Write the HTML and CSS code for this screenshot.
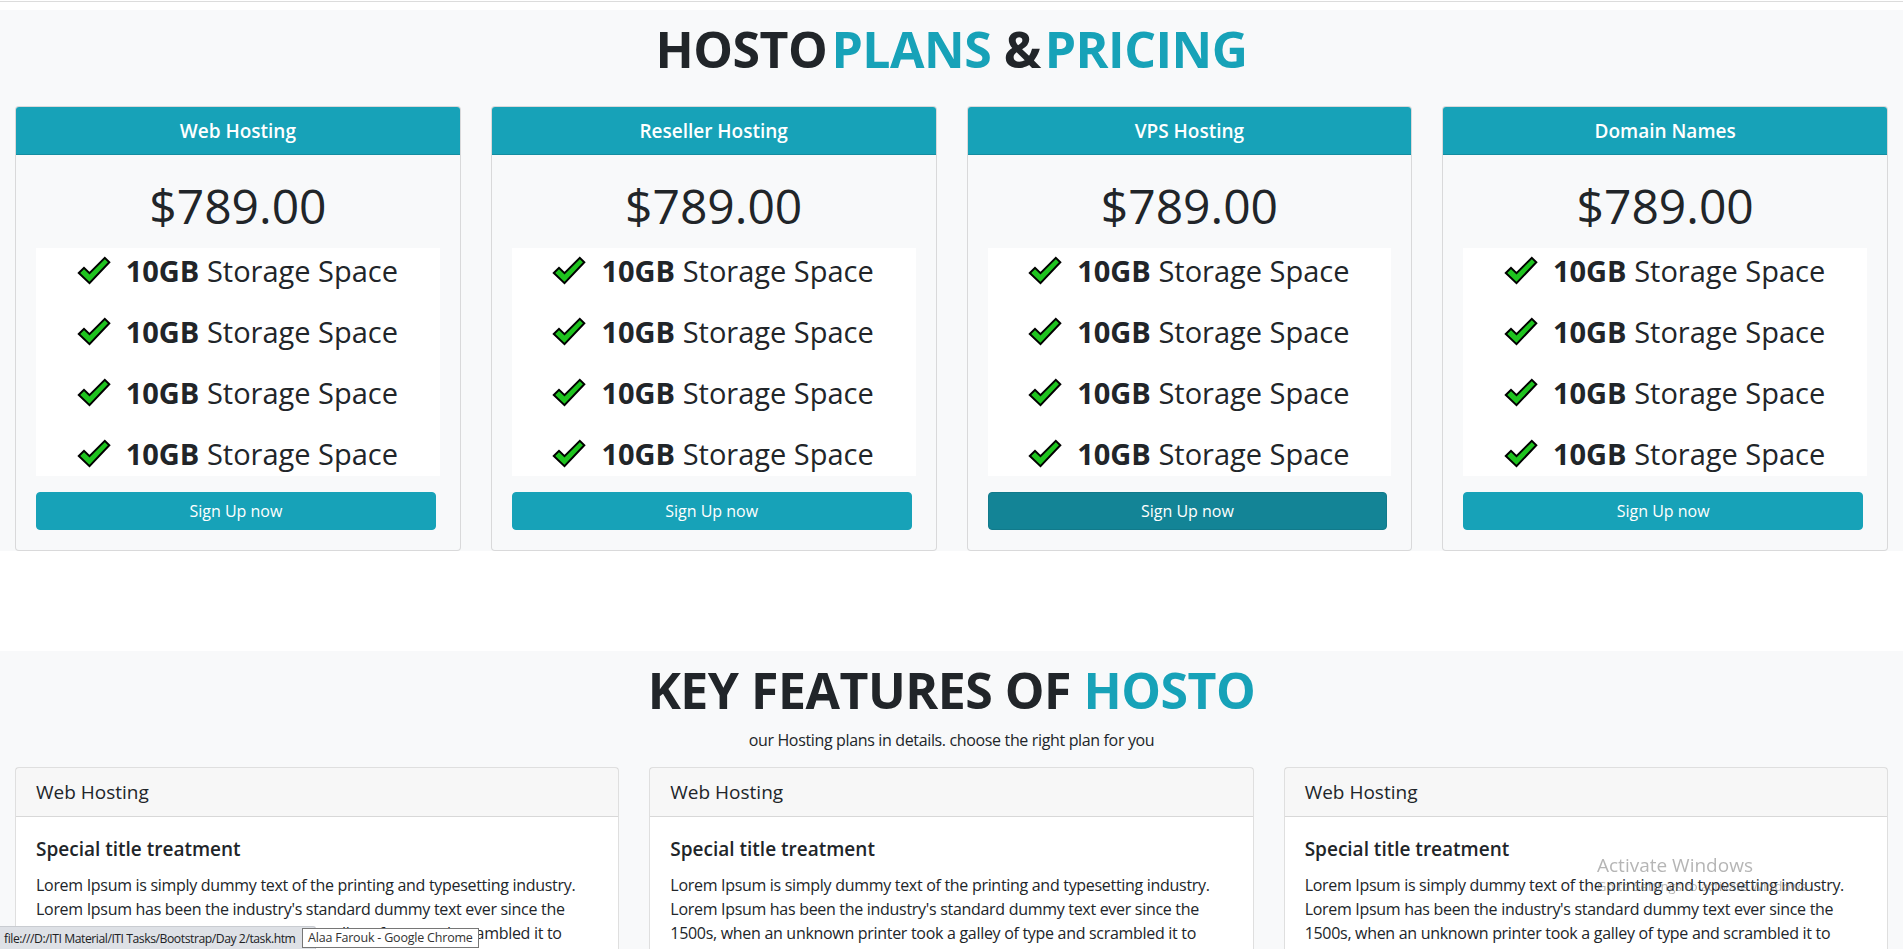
FILE: index.html
```html
<!DOCTYPE html>
<html lang="en">
<head>
<meta charset="utf-8">
<title>Hosto</title>
<link rel="stylesheet" href="styles.css">
</head>
<body>
<div class="topline"></div>
<section class="pricing">
  <h1 class="title title-pricing">HOSTO<span class="accent">PLANS</span> &amp;<span class="accent">PRICING</span></h1>
  <div class="plans">
    <div class="plan-card">
      <div class="plan-head">Web Hosting</div>
      <div class="plan-body">
        <div class="price">$789.00</div>
        <ul class="features">
          <li><svg class="check" viewBox="0 0 32 27"><polygon points="0.8,16 6,10.8 11.5,16.2 26.8,0.8 31.3,5.2 11.5,26.2"/></svg><span><b>10GB</b> Storage Space</span></li>
          <li><svg class="check" viewBox="0 0 32 27"><polygon points="0.8,16 6,10.8 11.5,16.2 26.8,0.8 31.3,5.2 11.5,26.2"/></svg><span><b>10GB</b> Storage Space</span></li>
          <li><svg class="check" viewBox="0 0 32 27"><polygon points="0.8,16 6,10.8 11.5,16.2 26.8,0.8 31.3,5.2 11.5,26.2"/></svg><span><b>10GB</b> Storage Space</span></li>
          <li><svg class="check" viewBox="0 0 32 27"><polygon points="0.8,16 6,10.8 11.5,16.2 26.8,0.8 31.3,5.2 11.5,26.2"/></svg><span><b>10GB</b> Storage Space</span></li>
        </ul>
        <button class="btn">Sign Up now</button>
      </div>
    </div>
    <div class="plan-card">
      <div class="plan-head">Reseller Hosting</div>
      <div class="plan-body">
        <div class="price">$789.00</div>
        <ul class="features">
          <li><svg class="check" viewBox="0 0 32 27"><polygon points="0.8,16 6,10.8 11.5,16.2 26.8,0.8 31.3,5.2 11.5,26.2"/></svg><span><b>10GB</b> Storage Space</span></li>
          <li><svg class="check" viewBox="0 0 32 27"><polygon points="0.8,16 6,10.8 11.5,16.2 26.8,0.8 31.3,5.2 11.5,26.2"/></svg><span><b>10GB</b> Storage Space</span></li>
          <li><svg class="check" viewBox="0 0 32 27"><polygon points="0.8,16 6,10.8 11.5,16.2 26.8,0.8 31.3,5.2 11.5,26.2"/></svg><span><b>10GB</b> Storage Space</span></li>
          <li><svg class="check" viewBox="0 0 32 27"><polygon points="0.8,16 6,10.8 11.5,16.2 26.8,0.8 31.3,5.2 11.5,26.2"/></svg><span><b>10GB</b> Storage Space</span></li>
        </ul>
        <button class="btn">Sign Up now</button>
      </div>
    </div>
    <div class="plan-card">
      <div class="plan-head">VPS Hosting</div>
      <div class="plan-body">
        <div class="price">$789.00</div>
        <ul class="features">
          <li><svg class="check" viewBox="0 0 32 27"><polygon points="0.8,16 6,10.8 11.5,16.2 26.8,0.8 31.3,5.2 11.5,26.2"/></svg><span><b>10GB</b> Storage Space</span></li>
          <li><svg class="check" viewBox="0 0 32 27"><polygon points="0.8,16 6,10.8 11.5,16.2 26.8,0.8 31.3,5.2 11.5,26.2"/></svg><span><b>10GB</b> Storage Space</span></li>
          <li><svg class="check" viewBox="0 0 32 27"><polygon points="0.8,16 6,10.8 11.5,16.2 26.8,0.8 31.3,5.2 11.5,26.2"/></svg><span><b>10GB</b> Storage Space</span></li>
          <li><svg class="check" viewBox="0 0 32 27"><polygon points="0.8,16 6,10.8 11.5,16.2 26.8,0.8 31.3,5.2 11.5,26.2"/></svg><span><b>10GB</b> Storage Space</span></li>
        </ul>
        <button class="btn btn-hover">Sign Up now</button>
      </div>
    </div>
    <div class="plan-card">
      <div class="plan-head">Domain Names</div>
      <div class="plan-body">
        <div class="price">$789.00</div>
        <ul class="features">
          <li><svg class="check" viewBox="0 0 32 27"><polygon points="0.8,16 6,10.8 11.5,16.2 26.8,0.8 31.3,5.2 11.5,26.2"/></svg><span><b>10GB</b> Storage Space</span></li>
          <li><svg class="check" viewBox="0 0 32 27"><polygon points="0.8,16 6,10.8 11.5,16.2 26.8,0.8 31.3,5.2 11.5,26.2"/></svg><span><b>10GB</b> Storage Space</span></li>
          <li><svg class="check" viewBox="0 0 32 27"><polygon points="0.8,16 6,10.8 11.5,16.2 26.8,0.8 31.3,5.2 11.5,26.2"/></svg><span><b>10GB</b> Storage Space</span></li>
          <li><svg class="check" viewBox="0 0 32 27"><polygon points="0.8,16 6,10.8 11.5,16.2 26.8,0.8 31.3,5.2 11.5,26.2"/></svg><span><b>10GB</b> Storage Space</span></li>
        </ul>
        <button class="btn">Sign Up now</button>
      </div>
    </div>
  </div>
</section>

<div class="section-gap"></div>

<section class="key-features">
  <h1 class="title title-features">KEY FEATURES OF <span class="accent-plain">HOSTO</span></h1>
  <p class="sub">our Hosting plans in details. choose the right plan for you</p>
  <div class="feat-grid">
    <div class="feat-card">
      <div class="feat-head">Web Hosting</div>
      <div class="feat-body">
        <h5 class="feat-title">Special title treatment</h5>
        <p class="feat-text">Lorem Ipsum is simply dummy text of the printing and typesetting industry. Lorem Ipsum has been the industry's standard dummy text ever since the 1500s, when an unknown printer took a galley of type and scrambled it to make a type specimen book.</p>
      </div>
    </div>
    <div class="feat-card">
      <div class="feat-head">Web Hosting</div>
      <div class="feat-body">
        <h5 class="feat-title">Special title treatment</h5>
        <p class="feat-text">Lorem Ipsum is simply dummy text of the printing and typesetting industry. Lorem Ipsum has been the industry's standard dummy text ever since the 1500s, when an unknown printer took a galley of type and scrambled it to make a type specimen book.</p>
      </div>
    </div>
    <div class="feat-card">
      <div class="feat-head">Web Hosting</div>
      <div class="feat-body">
        <h5 class="feat-title">Special title treatment</h5>
        <p class="feat-text">Lorem Ipsum is simply dummy text of the printing and typesetting industry. Lorem Ipsum has been the industry's standard dummy text ever since the 1500s, when an unknown printer took a galley of type and scrambled it to make a type specimen book.</p>
      </div>
    </div>
  </div>
</section>

<div class="status-url">file:///D:/ITI Material/ITI Tasks/Bootstrap/Day 2/task.htm</div>
<div class="status-tip">Alaa Farouk - Google Chrome</div>
<div class="watermark">
  <div class="wm-1">Activate Windows</div>
  <div class="wm-2">Go to Settings to activate Windows.</div>
</div>
</body>
</html>
```

FILE: styles.css
```css
* { box-sizing: border-box; }
html, body { margin: 0; padding: 0; }
body {
  font-family: "Open Sans", "Noto Sans", sans-serif;
  font-size: 16px;
  line-height: 1.5;
  color: #212529;
  background: #fff;
  overflow: hidden;
}

.topline {
  margin-top: 1px;
  height: 9px;
  border-top: 1px solid #dcdcdc;
}

/* ---------- Pricing ---------- */
.pricing {
  background: #f8f9fa;
  padding-top: 9px;
}
.title {
  margin: 0;
  text-align: center;
  font-size: 50px;
  line-height: 60px;
  font-weight: 700;
  color: #212529;
  letter-spacing: -0.5px;
}
.title-pricing { margin-bottom: 27px; }
.title-features { margin-bottom: 8px; }
.accent { color: #17a2b8; margin-left: 4px; }
.accent-plain { color: #17a2b8; }

.plans {
  display: grid;
  grid-template-columns: repeat(4, 1fr);
  column-gap: 30px;
  padding: 0 15px;
}
.plan-card {
  background: #f8f9fa;
  border: 1px solid rgba(0,0,0,.125);
  border-radius: 4px;
  overflow: hidden;
}
.plan-head {
  background: #17a2b8;
  color: #fff;
  text-align: center;
  font-size: 19px;
  line-height: 24px;
  font-weight: 600;
  padding: 12px 20px 11px;
  border-bottom: 1px solid rgba(0,0,0,.125);
}
.plan-body { padding: 20px; }
.price {
  text-align: center;
  font-size: 48px;
  line-height: 62px;
  margin-bottom: 11px;
}
.features {
  list-style: none;
  margin: 0;
  padding: 0;
  background: #fff;
}
.features li {
  display: flex;
  justify-content: center;
  align-items: center;
  gap: 16px;
  font-size: 29px;
  line-height: 45px;
}
.features li + li { margin-top: 16px; }
.features b { font-weight: 700; }
.check {
  width: 32px;
  height: 27px;
  flex: none;
  overflow: visible;
}
.check polygon {
  fill: #1fc31f;
  stroke: #000;
  stroke-width: 2;
  stroke-linejoin: miter;
}
.btn {
  display: block;
  width: calc(100% - 4px);
  margin-top: 16px;
  padding: 6px 12px;
  font-family: inherit;
  font-size: 16px;
  line-height: 24px;
  color: #fff;
  background: #17a2b8;
  border: 1px solid #17a2b8;
  border-radius: 4px;
}
.btn-hover {
  background: #138496;
  border-color: #117a8b;
}

.section-gap { height: 100px; }

/* ---------- Key features ---------- */
.key-features {
  background: #f8f9fa;
  padding-top: 9px;
  padding-bottom: 40px;
}
.sub {
  margin: 0 0 15px;
  text-align: center;
  font-size: 16px;
  letter-spacing: -0.35px;
  line-height: 24px;
}
.feat-grid {
  display: grid;
  grid-template-columns: repeat(3, 1fr);
  column-gap: 30px;
  padding: 0 15px;
}
.feat-card {
  background: #fff;
  border: 1px solid rgba(0,0,0,.125);
  border-radius: 4px;
}
.feat-head {
  background: rgba(0,0,0,.03);
  border-bottom: 1px solid rgba(0,0,0,.125);
  padding: 12px 20px;
  font-size: 19px;
  line-height: 24px;
  font-weight: 500;
}
.feat-body { padding: 20px; }
.feat-title {
  margin: 0 0 12px;
  font-size: 19px;
  line-height: 24px;
  font-weight: 600;
}
.feat-text {
  margin: 0 0 16px;
  font-size: 16px;
  letter-spacing: -0.3px;
  line-height: 24px;
}

/* ---------- Screen overlays (browser status / OS watermark) ---------- */
.status-url {
  position: fixed;
  left: 0;
  bottom: 0;
  width: 316px;
  height: 23px;
  padding: 2px 4px 0 4px;
  font-size: 12.2px;
  letter-spacing: -0.45px;
  line-height: 19px;
  color: #202124;
  background: #dee1e6;
  border-top: 1px solid #c9ccd1;
  border-right: 1px solid #c9ccd1;
  border-top-right-radius: 3px;
  white-space: nowrap;
  overflow: hidden;
}
.status-tip {
  position: fixed;
  left: 302px;
  bottom: 1px;
  height: 20px;
  padding: 0 5px;
  font-size: 12.5px;
  letter-spacing: -0.2px;
  line-height: 18px;
  color: #333;
  background: #fff;
  border: 1px solid #767676;
}
.watermark {
  position: fixed;
  left: 1597px;
  top: 852px;
  color: rgba(120,120,120,.55);
  pointer-events: none;
}
.wm-1 { font-size: 19px; line-height: 26px; }
.wm-2 { font-size: 13px; line-height: 16px; }
```
